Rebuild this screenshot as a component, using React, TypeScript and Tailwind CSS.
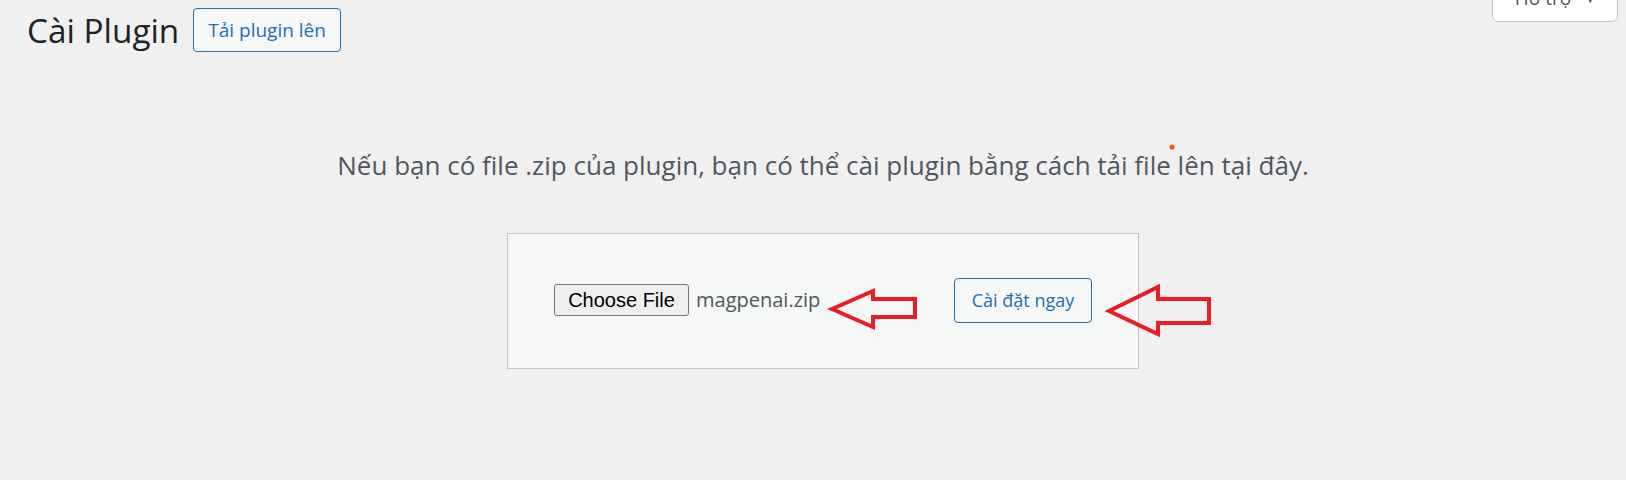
import React from "react";

const ui = { fontFamily: '"Open Sans", "Noto Sans", sans-serif' };
const arial = { fontFamily: '"Liberation Sans", Arial, sans-serif' };

export default function App() {
  return (
    <div className="relative w-[1626px] h-[480px] overflow-hidden bg-[#f0f0f1]" style={ui}>
      {/* Help tab */}
      <div className="absolute right-[8px] top-[-20px] w-[126px] h-[42px] bg-white border border-[#c3c4c7] rounded-b-[6px] flex items-end justify-center gap-[14px] pb-[13px]">
        <span className="text-[19px] leading-none text-[#50575e]">Hỗ trợ</span>
        <span className="text-[10px] leading-none text-[#50575e] mb-[4px]">▼</span>
      </div>

      {/* Header */}
      <div className="flex items-center pl-[27px] pt-[8px] gap-[14px]">
        <h1 className="text-[33.3px] leading-[44px] text-[#1d2327] font-normal">Cài Plugin</h1>
        <div className="h-[44px] px-[14px] flex items-center border border-[#2271b1] rounded-[4px] bg-[#f6f7f7] text-[#2271b1] text-[19px]">
          Tải plugin lên
        </div>
      </div>

      {/* Help text */}
      <p className="mt-[97px] text-center text-[26px] leading-[32px] text-[#50575e] pl-[20px]">
        Nếu bạn có file .zip của plugin, bạn có thể cài plugin bằng cách tải file lên tại đây.
      </p>

      {/* Upload box */}
      <div className="ml-[507px] mt-[52px] w-[632px] h-[136px] border border-[#c3c4c7] bg-[#f6f7f7] pl-[46px] pt-[44px]">
        <div className="flex items-start">
          <div className="w-[400px] flex items-center gap-[7px] pt-[6px]">
            <div
              className="h-[32px] w-[135px] flex items-center justify-center border border-[#767676] rounded-[3px] bg-[#efefef] text-[20px] text-black"
              style={arial}
            >
              Choose File
            </div>
            <span className="text-[20px] text-[#50575e]">magpenai.zip</span>
          </div>
          <div className="h-[45px] w-[138px] flex items-center justify-center border border-[#2271b1] rounded-[4px] bg-[#f6f7f7] text-[#2271b1] text-[18px]">
            Cài đặt ngay
          </div>
        </div>
      </div>

      {/* Annotation overlay */}
      <svg className="absolute left-0 top-0 pointer-events-none" width="1626" height="480" viewBox="0 0 1626 480">
        <polygon
          points="832,309 873,291 873,299 915,299 915,317 873,317 873,327"
          fill="none"
          stroke="#ed1c24"
          strokeWidth="4"
          strokeLinejoin="miter"
        />
        <polygon
          points="1109,311 1158,287 1158,299 1209,299 1209,323 1158,323 1158,334"
          fill="none"
          stroke="#ed1c24"
          strokeWidth="4"
          strokeLinejoin="miter"
        />
        <circle cx="1172" cy="147" r="2.6" fill="#f5580f" />
      </svg>
    </div>
  );
}
